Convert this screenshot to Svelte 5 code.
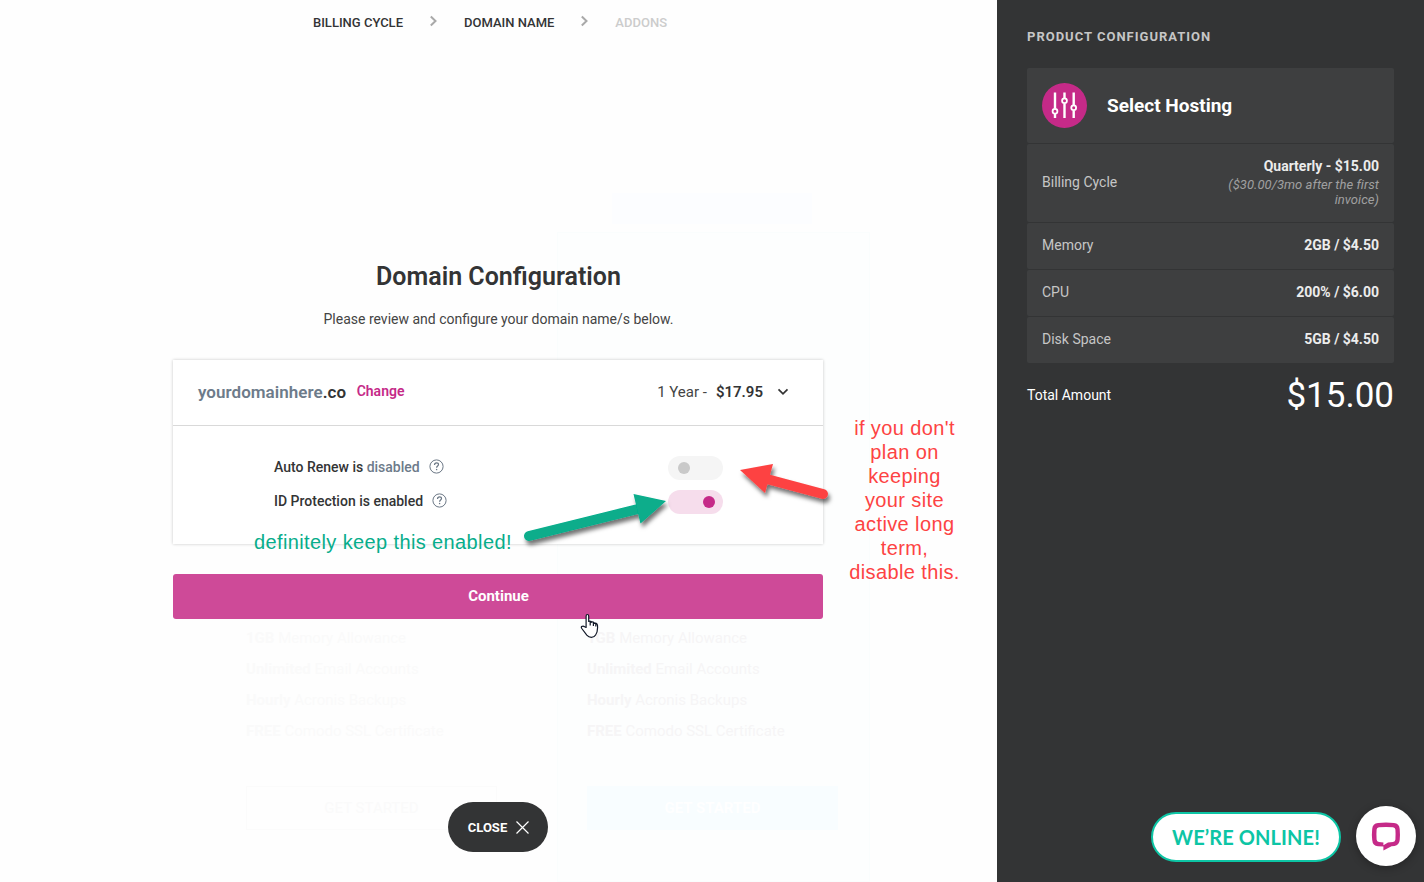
<script>
  const steps = [
    { label: 'BILLING CYCLE', muted: false },
    { label: 'DOMAIN NAME', muted: false },
    { label: 'ADDONS', muted: true }
  ];
  const rows = [
    { label: 'Memory', value: '2GB / $4.50' },
    { label: 'CPU', value: '200% / $6.00' },
    { label: 'Disk Space', value: '5GB / $4.50' }
  ];
  const features = [
    ['1GB', 'Memory Allowance'],
    ['Unlimited', 'Email Accounts'],
    ['Hourly', 'Acronis Backups'],
    ['FREE', 'Comodo SSL Certificate']
  ];
  const note = ["if you don't", 'plan on', 'keeping', 'your site', 'active long', 'term,', 'disable this.'];
</script>

{#snippet help()}
  <svg class="help" width="15" height="15" viewBox="0 0 15 15" fill="none" stroke="#6b7785">
    <circle cx="7.5" cy="7.5" r="6.6" stroke-width="1" />
    <path d="M5.5 5.9c0-1.3.8-2.1 2-2.1s2 .8 2 1.8c0 1.4-1.9 1.5-1.9 3.1" stroke-width="1.2" />
    <path d="M7.6 9.9v1.3" stroke-width="1.3" />
  </svg>
{/snippet}

<div class="page">
  <main>
    <div class="backdrop">
      <div class="band"></div>
      <div class="plans">
        {#each [0, 1] as i}
          <div class="plan" class:featured={i === 1}>
            {#each features as [lead, rest]}
              <p><b>{lead}</b> {rest}</p>
            {/each}
            <div class="start">GET STARTED</div>
          </div>
        {/each}
      </div>
    </div>

    <nav>
      {#each steps as step, i}
        {#if i > 0}
          <svg class="sep" width="9" height="12" viewBox="0 0 9 12" fill="none" stroke="#a9a9a9" stroke-width="2">
            <path d="M1.8 1.5 6.5 6 1.8 10.5" />
          </svg>
        {/if}
        <span class:muted={step.muted}>{step.label}</span>
      {/each}
    </nav>

    <section class="config">
      <h1>Domain Configuration</h1>
      <p class="lead">Please review and configure your domain name/s below.</p>
      <div class="card">
        <header>
          <div class="domain"><span>yourdomainhere</span>.co</div>
          <a class="change">Change</a>
          <div class="term">1 Year -<b>$17.95</b></div>
          <svg class="caret" width="12" height="8" viewBox="0 0 12 8" fill="none" stroke="#333" stroke-width="1.7"><path d="M1.5 1.3 6 5.8 10.5 1.3" /></svg>
        </header>
        <div class="options">
          <div class="option">
            <span>Auto Renew is <em>disabled</em></span>{@render help()}
            <i class="toggle"></i>
          </div>
          <div class="option">
            <span>ID Protection is enabled</span>{@render help()}
            <i class="toggle on"></i>
          </div>
        </div>
      </div>
      <button class="continue">Continue</button>
    </section>

    <button class="close">
      CLOSE
      <svg width="13" height="13" viewBox="0 0 13 13" stroke="#fff" stroke-width="1.2"><path d="M.5.5l12 12M12.500.5l-12 12" /></svg>
    </button>
  </main>

  <aside>
    <h2>PRODUCT CONFIGURATION</h2>
    <div class="summary">
      <div class="row head">
        <svg width="45" height="45" viewBox="0 0 45 45" fill="none" stroke="#fff">
          <circle cx="22.500" cy="22.500" r="22.500" fill="#c52a88" stroke="none" />
          <g stroke-width="2.400">
            <path d="M13 9.500v16M13 31v4M22.500 9.500v5.500M22.500 20.500v14.500M31.700 9.500v12.500M31.700 27.500v7.500" />
          </g>
          <g stroke-width="1.800">
            <circle cx="13" cy="28.200" r="2.400" />
            <circle cx="22.500" cy="17.700" r="2.400" />
            <circle cx="31.700" cy="24.700" r="2.400" />
          </g>
        </svg>
        <strong>Select Hosting</strong>
      </div>
      <div class="row billing">
        <span>Billing Cycle</span>
        <div class="price"><b>Quarterly - $15.00</b><i>($30.00/3mo after the first invoice)</i></div>
      </div>
      {#each rows as r}
        <div class="row"><span>{r.label}</span><b>{r.value}</b></div>
      {/each}
    </div>
    <div class="total"><span>Total Amount</span><div>$15.00</div></div>
    <div class="chat">
      <div class="online">WE’RE ONLINE!</div>
      <div class="bubble">
        <svg width="30" height="30" viewBox="0 0 30 30">
          <path fill="#c52a88" fill-rule="evenodd" d="M7 2Q15 1.200 23 2Q28.300 2.500 28.700 8Q29.200 13.500 28.700 19Q28.200 24.300 23.500 24.900L20.500 25.200L12.400 29.600V25.600L7 25.200Q1.600 24.800 1.200 19Q.600 13.500 1.200 8Q1.600 2.500 7 2ZM8 6.200Q5.800 6.400 5.600 8.600Q5.200 13.500 5.600 18.500Q5.800 20.900 8 21.100L12.400 21.400V24.200L17 21.400L22 21.100Q24.200 20.800 24.400 18.500Q24.800 13.500 24.400 8.600Q24.200 6.400 22 6.200Q15 5.600 8 6.200Z" />
        </svg>
      </div>
    </div>
  </aside>

  <svg class="arrows" width="1424" height="882" viewBox="0 0 1424 882">
    <defs>
      <filter id="shade" x="-20%" y="-30%" width="140%" height="180%">
        <feDropShadow dx="2" dy="4" stdDeviation="2.200" flood-color="#000" flood-opacity=".55" />
      </filter>
    </defs>
    <g filter="url(#shade)" fill="#07ad8b">
      <path d="M529 536 L642 508" stroke="#07ad8b" stroke-width="10" stroke-linecap="round" />
      <path d="M666 501 L633.500 494 L640.500 523.500Z" />
    </g>
    <g filter="url(#shade)" fill="#fd4343">
      <path d="M823 494 L765 478.500" stroke="#fd4343" stroke-width="10" stroke-linecap="round" />
      <path d="M740 470 L773 464 L765 493Z" />
    </g>
    <path class="pointer" fill="#fff" stroke="#111827" stroke-width="1.200" stroke-linejoin="round" d="M585.500 627.500v-11.300q0-1.700 1.300-1.700t1.300 1.700v5.300q1-1 2.600 0v.8q1.400-.9 2.700.3v.8q1.800-.9 2.900.5.800 1 .7 3.500-.100 5-2 7.600-1.400 2.400-4.200 2.400-2.700 0-4.600-2.200l-5-6.700q-1-1.500.1-2.100 1.300-.9 2.700.4Z M589.600 621.500v4M592.800 622.500v3.500M595.200 623.500v3" transform="translate(.6 0)" />
  </svg>
  <div class="tip green">definitely keep this enabled!</div>
  <div class="tip red">{#each note as line}<div>{line}</div>{/each}</div>
</div>

<style>
  :global(body) { margin: 0; overflow: hidden; }
  * { box-sizing: border-box; }
  .page { position: relative; display: flex; width: 1424px; height: 882px; font-family: Roboto, sans-serif; color: #333435; overflow: hidden; }
  main { position: relative; width: 997px; background: #fefefe; display: flex; flex-direction: column; align-items: center; }
  nav { display: flex; align-items: center; height: 44px; margin-right: 17px; font-size: 13px; font-weight: 500; position: relative; padding-top: 1px; }
  .sep { margin: -3px 26px 0; }
  .muted { color: #ccc; }

  .backdrop { position: absolute; inset: 0; overflow: hidden; }
  .band { width: 200px; height: 31px; margin: 193px 0 0 612px; background: #fcfdff; }
  .plans { display: flex; gap: 28px; margin: 8px 0 0 216px; }
  .plan { flex: none; width: 313px; height: 650px; padding: 395px 29px 0; border: 1px solid transparent; font-size: 15px; color: #fafafa; }
  .plan.featured { background: #fdfefe; border-color: #fafdfd; color: #f6f5f6; }
  .plan p { margin: 0 0 11px; height: 20px; line-height: 20px; white-space: nowrap; }
  .start { display: flex; align-items: center; justify-content: center; width: 251px; height: 44px; margin-top: 45px; border: 1px solid #fbfbfb; }
  .featured .start { background: #f8fdff; border-color: #f8fdff; color: #fff; font-weight: 700; }

  .config { position: relative; width: 650px; margin-top: 215px; margin-right: 1px; text-align: center; }
  h1 { margin: 0; padding-left: 1px; font-size: 25px; line-height: 36px; font-weight: 600; }
  .lead { margin: 13px 0 30px; padding-left: 1px; font-size: 14px; line-height: 22px; color: #444; }
  .card { height: 184px; background: #fff; box-shadow: 0 0 3px rgba(0,0,0,.22); }
  header { display: flex; align-items: center; height: 66px; padding: 0 34px 2px 25px; border-bottom: 1px solid #d9d9d9; }
  .domain { font-size: 17px; font-weight: 600; letter-spacing: .04px; }
  .domain span, em { color: #6d7b8a; font-style: normal; }
  .change { margin: -2px auto 0 10.5px; font-size: 14px; font-weight: 600; color: #c52a88; }
  .term { font-size: 15px; color: #444; }
  .term b { margin-left: 9px; font-weight: 600; color: #333435; }
  .caret { margin-left: 14px; }
  .options { display: flex; flex-direction: column; gap: 10px; padding: 30px 100px 0 101px; }
  .option { display: flex; align-items: center; height: 24px; font-size: 14px; font-weight: 500; }
  .option span { margin-top: -2px; }
  .help { margin: -4px 0 0 9px; }
  .toggle { display: flex; align-items: center; width: 55px; height: 24px; margin-left: auto; padding: 0 8px 0 10px; border-radius: 12px; background: #f5f5f5; }
  .toggle::before { content: ''; width: 12px; height: 12px; border-radius: 50%; background: #c9c9c9; }
  .toggle.on { justify-content: flex-end; background: #f6ddec; }
  .toggle.on::before { background: #c52a88; }
  button { border: 0; font-family: inherit; color: #fff; }
  .continue { display: block; width: 650px; height: 45px; margin-top: 30px; border-radius: 3px; background: #ce4a98; font-size: 15px; font-weight: 700; padding: 0 0 1px 1px; }
  .close { position: relative; display: flex; align-items: center; justify-content: center; gap: 9px; width: 100px; height: 50px; margin: 183px 1px 0 0; border-radius: 25px; background: #333435; font-size: 13px; font-weight: 700; padding: 0 0 0 1px; }

  aside { position: relative; width: 427px; padding: 27px 30px; background: #333435; color: #fff; }
  h2 { margin: 0; font-size: 13px; line-height: 20px; font-weight: 700; letter-spacing: 1px; color: #c6c6c6; }
  .summary { display: flex; flex-direction: column; gap: 1px; margin-top: 21px; }
  .row { display: flex; align-items: center; justify-content: space-between; height: 46px; padding: 0 15px 2px; border-radius: 2px; background: #3e3f40; font-size: 14px; color: #c6c6c6; }
  .row b { color: #ececec; font-weight: 700; }
  .row.head { height: 75px; padding-bottom: 0; justify-content: flex-start; gap: 20px; }
  .head strong { font-size: 19px; font-weight: 700; color: #fff; }
  .row.billing { height: 78px; }
  .price { width: 165px; text-align: right; }
  .price b { display: block; line-height: 18px; margin-bottom: 2px; }
  .price i { display: block; font-size: 13px; line-height: 15px; letter-spacing: .04px; color: #a0a0a0; }
  .total { display: flex; justify-content: space-between; align-items: center; height: 60px; margin-top: 2px; font-size: 14px; }
  .total div { font-size: 35px; }
  .chat { position: absolute; right: 8px; bottom: 16px; display: flex; align-items: center; gap: 15px; }
  .online { display: flex; align-items: center; justify-content: center; width: 190px; height: 50px; margin-top: 2px; border: 2px solid #0dc5a5; border-radius: 25px; background: #fff; color: #0dc5a5; font: 700 20px Lato, sans-serif; letter-spacing: .1px; }
  .bubble { display: flex; align-items: center; justify-content: center; width: 60px; height: 60px; border-radius: 50%; background: #fff; box-shadow: 0 2px 8px rgba(0,0,0,.3); }

  .arrows { position: absolute; inset: 0; }
  .tip { position: absolute; font: 20px/24px "Liberation Sans", Arial, sans-serif; white-space: nowrap; letter-spacing: .38px; }
  .green { left: 254px; top: 530px; color: #07ad8b; }
  .red { left: 844px; top: 416px; width: 121px; color: #fd4343; text-align: center; }
</style>
